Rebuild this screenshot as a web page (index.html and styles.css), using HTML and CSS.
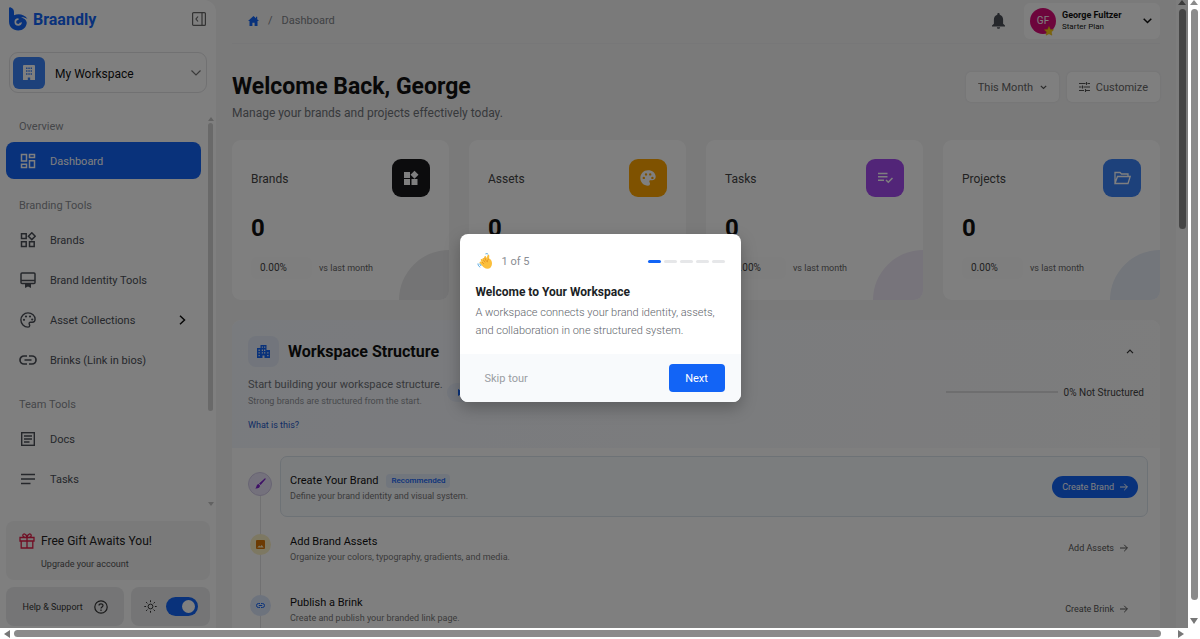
FILE: index.html
```html
<!DOCTYPE html>
<html lang="en">
<head>
    <meta charset="UTF-8">
    <meta name="viewport" content="width=device-width, initial-scale=1.0">
    <title>Braandly - Dashboard</title>
    <link rel="stylesheet" href="styles.css">
</head>
<body>
    <div class="frame">
        <div class="app">
            <aside class="sidebar">
                <div class="sidebar-top">
                    <a href="#" class="logo">
                        <svg width="19" height="24" viewBox="0 0 19 24"><path fill="#1264f6" fill-rule="evenodd" d="M0 1.500C0 .4 1 0 1.800.4 4 1.400 5 2.800 5 5v3.300C9 6.300 15.500 7 18.500 12c-2-1.300-4.300-1.900-6.500-1.700 3.300 1 5.300 2.700 5.800 5.500C17.500 20.300 14 23.500 9.200 23.500 4 23.500 0 19.800 0 14.500zM9.200 11.300a3.700 3.700 0 1 0 3.700 3.700c-.6.6-1.300.8-2 .6a1.900 1.900 0 1 1-1.700-2.500c.7-.6.700-1.200 0-1.800z"/></svg>
                        <span>Braandly</span>
                    </a>
                    <button class="icon-btn" aria-label="Collapse sidebar">
                        <svg width="14" height="14" viewBox="0 0 14 14" fill="none" stroke="#666" stroke-width="1.200"><rect x=".6" y=".6" width="12.800" height="12.800" rx="1"/><path d="M10 .6v12.800M6 4.500 4 7l2 2.500"/></svg>
                    </button>
                </div>

                <label class="workspace">
                    <span class="workspace-icon">
                        <svg width="12" height="15" viewBox="0 0 12 15"><path fill="#fff" fill-rule="evenodd" d="M1 0h10a1 1 0 0 1 1 1v14H7.200v-2.500H4.800V15H0V1a1 1 0 0 1 1-1zM3 2.500V4h1.500V2.500zm2.300 0V4h1.500V2.500zm2.300 0V4H9V2.500zM3 5.300v1.500h1.500V5.300zm2.300 0v1.500h1.500V5.300zm2.300 0v1.500H9V5.300zM3 8.200v1.500h1.500V8.200zm2.300 0v1.500h1.500V8.200zm2.300 0v1.500H9V8.200z"/></svg>
                    </span>
                    <select aria-label="Workspace">
                        <option>My Workspace</option>
                    </select>
                    <svg width="10" height="6" viewBox="0 0 10 6" fill="none" stroke="#777" stroke-width="1.200"><path d="m.5.5 4.500 4.500L9.500.5"/></svg>
                </label>

                <div class="nav-wrap">
                    <nav class="nav">
                        <h2>Overview</h2>
                        <ul>
                            <li><a href="#" class="active">
                                <svg width="16" height="16" viewBox="0 0 16 16" fill="none" stroke="currentColor" stroke-width="1.500"><path d="M1.500 1.500h5v6.500h-5zM9.500 1.500h5v3h-5zM9.500 7.800h5v6.700h-5zM1.500 11.200h5v3.300h-5z"/></svg>
                                Dashboard</a></li>
                        </ul>
                        <h2>Branding Tools</h2>
                        <ul>
                            <li><a href="#">
                                <svg width="16" height="16" viewBox="0 0 16 16" fill="none" stroke="currentColor" stroke-width="1.500"><path d="M1.500 1.800h4.700v4.700H1.500zM1.500 9.800h4.700v4.700H1.500zM9.500 9.800h4.700v4.700H9.500zM11.800.8l3.400 3.400-3.400 3.400-3.400-3.400z"/></svg>
                                Brands</a></li>
                            <li><a href="#">
                                <svg width="16" height="16" viewBox="0 0 16 16"><g fill="none" stroke="currentColor" stroke-width="1.500"><rect x="1" y="1" width="14" height="10.500" rx="1"/><path d="M1 8.500h14"/></g><path fill="currentColor" d="M5 11.500h6V16l-3-1.600L5 16z"/></svg>
                                Brand Identity Tools</a></li>
                            <li><a href="#">
                                <svg width="16" height="16" viewBox="0 0 16 16"><path fill="none" stroke="currentColor" stroke-width="1.400" d="M8 .9C4 .9.9 4 .9 8S4 15.100 8 15.100c1 0 1.700-.7 1.700-1.600 0-1-.6-1.200-.6-2 0-.7.600-1.300 1.300-1.300h1.800c1.800 0 2.900-1.200 2.900-3C15.100 3.600 12 .9 8 .9z"/><g fill="currentColor"><circle cx="4" cy="7.800" r="1.100"/><circle cx="6" cy="4.500" r="1.100"/><circle cx="10" cy="4.500" r="1.100"/><circle cx="12.200" cy="7.500" r="1.100"/></g></svg>
                                Asset Collections
                                <svg class="nav-arrow" width="7" height="10" viewBox="0 0 7 10" fill="none" stroke="#111" stroke-width="1.500"><path d="m1 .8 4.500 4.200L1 9.200"/></svg></a></li>
                            <li><a href="#">
                                <svg width="18" height="10" viewBox="0 0 18 10" fill="none" stroke="currentColor" stroke-width="1.700"><path d="M8 1H5a4 4 0 0 0 0 8h3M10 1h3a4 4 0 0 1 0 8h-3M5.500 5h7"/></svg>
                                Brinks (Link in bios)</a></li>
                        </ul>
                        <h2>Team Tools</h2>
                        <ul>
                            <li><a href="#">
                                <svg width="16" height="16" viewBox="0 0 16 16" fill="none" stroke="currentColor" stroke-width="1.400"><rect x="1.700" y="1.700" width="12.600" height="12.600"/><path d="M4 5h8M4 8h8M4 11h5.500"/></svg>
                                Docs</a></li>
                            <li><a href="#">
                                <svg width="16" height="12" viewBox="0 0 16 12" fill="none" stroke="currentColor" stroke-width="1.600"><path d="M1 1.500h14M1 6h14M1 10.500h9.500"/></svg>
                                Tasks</a></li>
                        </ul>
                    </nav>
                    <div class="nav-scroll">
                        <svg width="6" height="4" viewBox="0 0 6 4"><path fill="#c4c4c4" d="m3 0 3 4H0z"/></svg>
                        <span class="nav-thumb"></span>
                        <svg width="6" height="4" viewBox="0 0 6 4"><path fill="#c4c4c4" d="m3 4 3-4H0z"/></svg>
                    </div>
                </div>

                <div class="sidebar-bottom">
                    <a href="#" class="gift">
                        <svg width="16" height="16" viewBox="0 0 16 16" fill="none" stroke="#e11d48" stroke-width="1.300"><path d="M1 4.500h14V8H1zM2.200 8v7h11.600V8M8 4.500V15M8 4.500C6.500 4.500 3.800 4 3.800 2.400 3.800.2 7.500.3 8 4.500zM8 4.500c1.500 0 4.200-.5 4.200-2.100C12.200.2 8.500.3 8 4.500z"/></svg>
                        <span>
                            <strong>Free Gift Awaits You!</strong>
                            <small>Upgrade your account</small>
                        </span>
                    </a>
                    <div class="sidebar-actions">
                        <button class="help">Help &amp; Support
                            <svg width="14" height="14" viewBox="0 0 14 14" fill="none" stroke="#333" stroke-width="1.200"><circle cx="7" cy="7" r="6.200"/><path d="M5 5.600C5 3.200 9 3.200 9 5.500 9 7 7 6.900 7 8.600M7 9.500V11"/></svg>
                        </button>
                        <label class="theme">
                            <svg width="13" height="13" viewBox="0 0 13 13" fill="none" stroke="#333"><circle cx="6.500" cy="6.500" r="2.400"/><path d="M6.500.3v1.800M6.500 10.900v1.800M.3 6.500h1.800M10.900 6.500h1.800M2.100 2.100l1.300 1.300M9.600 9.600l1.300 1.300M10.900 2.100 9.600 3.400M3.400 9.600l-1.300 1.300"/></svg>
                            <input type="checkbox" class="switch" aria-label="Theme" checked>
                        </label>
                    </div>
                </div>
            </aside>

            <main class="main">
                <header class="topbar">
                    <nav class="breadcrumb">
                        <a href="#" aria-label="Home"><svg width="11" height="10" viewBox="0 0 11 10"><path fill="#1264f6" d="M5.500 0 8 2.200V.8h1.200v2.500L11 5H9.500v5H6.600V6.800H4.400V10H1.500V5H0z"/></svg></a>
                        <span>/</span>
                        <span>Dashboard</span>
                    </nav>
                    <button class="icon-btn bell" aria-label="Notifications">
                        <svg width="13" height="16" viewBox="0 0 13 16"><path fill="#4b4f57" d="M6.500 0c.7 0 1.200.5 1.200 1.200v.5c2.200.5 3.400 2.500 3.400 4.800v4.200l1.900 1.900v.8H0v-.8l1.900-1.900V6.500c0-2.300 1.200-4.300 3.400-4.800v-.5C5.300.5 5.800 0 6.500 0zM4.900 14.200h3.200c0 .900-.700 1.600-1.600 1.600s-1.600-.7-1.600-1.600z"/></svg>
                    </button>
                    <button class="user">
                        <span class="avatar">GF
                            <svg class="star" width="10" height="10" viewBox="0 0 10 10"><path fill="#facc15" stroke="#eab308" stroke-width=".5" d="m5 .5 1.400 2.900 3.200.4-2.300 2.200.600 3.200L5 7.700 2.100 9.200l.600-3.200L.4 3.800l3.200-.4z"/></svg>
                        </span>
                        <span class="user-text">
                            <strong>George Fultzer</strong>
                            <small>Starter Plan</small>
                        </span>
                        <svg width="9" height="6" viewBox="0 0 9 6" fill="none" stroke="#111" stroke-width="1.500"><path d="m.7.7 3.800 3.800L8.300.7"/></svg>
                    </button>
                </header>

                <div class="welcome">
                    <div>
                        <h1>Welcome Back, George</h1>
                        <p>Manage your brands and projects effectively today.</p>
                    </div>
                    <div class="welcome-actions">
                        <label class="control">
                            <select aria-label="Period">
                                <option>This Month</option>
                            </select>
                            <svg width="7" height="5" viewBox="0 0 7 5" fill="none" stroke="#555" stroke-width="1.200"><path d="m.8.8 2.700 2.700L6.200.8"/></svg>
                        </label>
                        <button class="control">
                            <svg width="11" height="10" viewBox="0 0 11 10" fill="none" stroke="#555" stroke-width="1.100"><path d="M0 1.500h6.500M8.500 1.500H11M7.500 0v3M0 5h2.500M4.500 5H11M3.500 3.500v3M0 8.500h5M7 8.500h4M6.500 7v3"/></svg>
                            Customize
                        </button>
                    </div>
                </div>

                <section class="stats">
                    <article class="card card-brands">
                        <div class="card-top">
                            <h3>Brands</h3>
                            <span class="card-icon"><svg width="16" height="16" viewBox="0 0 16 16"><path fill="#fff" d="M1 2h6v6H1zM1 9h6v6H1zM8.500 9h6v6h-6zM11.500.8l4 4-4 4-4-4z"/></svg></span>
                        </div>
                        <p class="value">0</p>
                        <p class="trend"><span>0.00%</span> vs last month</p>
                    </article>
                    <article class="card card-assets">
                        <div class="card-top">
                            <h3>Assets</h3>
                            <span class="card-icon"><svg width="16" height="16" viewBox="0 0 16 16"><path fill="#fff" fill-rule="evenodd" d="M8 .3C3.700.3.3 3.700.3 8s3.400 7.700 7.700 7.700c1.200 0 2-.9 2-2 0-1.100-.7-1.400-.7-2.200 0-.7.500-1.200 1.200-1.200H12c2.200 0 3.700-1.400 3.700-3.500C15.700 3 12.300.3 8 .3zM3.800 6.700a1.200 1.200 0 1 0 .01 2.400 1.200 1.200 0 0 0 0-2.400zM6 3.200a1.200 1.200 0 1 0 .01 2.400A1.200 1.200 0 0 0 6 3.200zm4.200 0a1.200 1.200 0 1 0 .01 2.400 1.200 1.200 0 0 0 0-2.400zm2.200 3.500a1.200 1.200 0 1 0 .01 2.400 1.200 1.200 0 0 0 0-2.400z"/></svg></span>
                        </div>
                        <p class="value">0</p>
                        <p class="trend"><span>0.00%</span> vs last month</p>
                    </article>
                    <article class="card card-tasks">
                        <div class="card-top">
                            <h3>Tasks</h3>
                            <span class="card-icon"><svg width="16" height="14" viewBox="0 0 16 14" fill="none" stroke="#fff" stroke-width="1.500"><path d="M1 2.500h9.500M1 5.800h9.500M1 9.200h6M9 9l2.300 2.300L15.500 7"/></svg></span>
                        </div>
                        <p class="value">0</p>
                        <p class="trend"><span>0.00%</span> vs last month</p>
                    </article>
                    <article class="card card-projects">
                        <div class="card-top">
                            <h3>Projects</h3>
                            <span class="card-icon"><svg width="17" height="14" viewBox="0 0 17 14" fill="none" stroke="#fff" stroke-width="1.300"><path d="M1 12.500V1.500h5L7.500 3H14v2.500M1 12.500 3.500 5.500h12.700L14 12.500z"/></svg></span>
                        </div>
                        <p class="value">0</p>
                        <p class="trend"><span>0.00%</span> vs last month</p>
                    </article>
                </section>

                <section class="structure">
                    <div class="structure-head">
                        <div class="structure-title">
                            <span class="structure-icon"><svg width="13" height="13" viewBox="0 0 13 13"><path fill="#1264f6" fill-rule="evenodd" d="M3.500 0h6v5H13v8H7.500v-2.500h-2V13H0V3h3.500zM4.800 1.500v1.300H6V1.500zm2.200 0v1.300h1.300V1.500zM1.500 4.600v1.300h1.300V4.600zm3.300 0v1.300H6V4.600zm2.200 0v1.300h1.300V4.600zM1.500 7.300v1.300h1.300V7.300zm3.300 0v1.300H6V7.300zm2.200 0v1.300h1.300V7.300zm3.200 0v1.300h1.300V7.300zM1.500 10v1.300h1.300V10zm8.700 0v1.300h1.300V10z"/></svg></span>
                            <h2>Workspace Structure</h2>
                            <button class="icon-btn" aria-label="Collapse section">
                                <svg width="8" height="5" viewBox="0 0 8 5" fill="none" stroke="#333" stroke-width="1.200"><path d="m1 4.200 3-3 3 3"/></svg>
                            </button>
                        </div>
                        <div class="structure-body">
                            <div>
                                <p class="lead">Start building your workspace structure.</p>
                                <p class="note">Strong brands are structured from the start.</p>
                            </div>
                            <span class="play"><svg width="6" height="7" viewBox="0 0 6 7"><path fill="#1264f6" d="M0 0l6 3.500L0 7z"/></svg></span>
                            <label class="progress"><progress value="0" max="100"></progress>0% Not Structured</label>
                        </div>
                        <a href="#" class="what">What is this?</a>
                    </div>

                    <ol class="steps">
                        <li class="step current">
                            <span class="step-icon purple"><svg width="11" height="11" viewBox="0 0 11 11"><path fill="#7e22ce" d="M9.700.4c.5-.3 1.200.4.9.9L5.600 6.900 4.100 5.400zM3.500 6l1.500 1.500C5 9.500 3.500 10.600.3 10.400 1.700 9.700 1.300 6.200 3.500 6z"/></svg></span>
                            <div class="step-box">
                                <div class="step-text">
                                    <h3>Create Your Brand <span class="badge">Recommended</span></h3>
                                    <p>Define your brand identity and visual system.</p>
                                </div>
                                <button class="step-btn">Create Brand <svg width="8" height="8" viewBox="0 0 8 8" fill="none" stroke="currentColor"><path d="M0 4h7.300M4.200.8 7.400 4 4.200 7.200"/></svg></button>
                            </div>
                        </li>
                        <li class="step">
                            <span class="step-icon yellow"><svg width="9" height="9" viewBox="0 0 9 9"><path fill="#d97706" fill-rule="evenodd" d="M1 0h7a1 1 0 0 1 1 1v7a1 1 0 0 1-1 1H1a1 1 0 0 1-1-1V1a1 1 0 0 1 1-1zM1.300 7.500h6.400L5.700 5 4.300 6.600 3.200 5.500z"/></svg></span>
                            <div class="step-box">
                                <div class="step-text">
                                    <h3>Add Brand Assets</h3>
                                    <p>Organize your colors, typography, gradients, and media.</p>
                                </div>
                                <button class="step-btn">Add Assets <svg width="8" height="8" viewBox="0 0 8 8" fill="none" stroke="currentColor"><path d="M0 4h7.300M4.200.8 7.400 4 4.200 7.200"/></svg></button>
                            </div>
                        </li>
                        <li class="step">
                            <span class="step-icon blue"><svg width="9" height="5" viewBox="0 0 9 5" fill="none" stroke="#1264f6"><path d="M4 .5H2.500a2 2 0 0 0 0 4H4M5 .5h1.500a2 2 0 0 1 0 4H5M2.800 2.500h3.400"/></svg></span>
                            <div class="step-box">
                                <div class="step-text">
                                    <h3>Publish a Brink</h3>
                                    <p>Create and publish your branded link page.</p>
                                </div>
                                <button class="step-btn">Create Brink <svg width="8" height="8" viewBox="0 0 8 8" fill="none" stroke="currentColor"><path d="M0 4h7.300M4.200.8 7.400 4 4.200 7.200"/></svg></button>
                            </div>
                        </li>
                    </ol>
                </section>
            </main>

            <div class="scroll inner">
                <svg width="8" height="5" viewBox="0 0 8 5"><path fill="#777" d="m4 0 4 5H0z"/></svg>
                <span class="thumb"></span>
            </div>
            <div class="overlay"></div>
        </div>

        <div class="scroll outer">
            <svg width="8" height="5" viewBox="0 0 8 5"><path fill="#8b8b8b" d="m4 0 4 5H0z"/></svg>
            <span class="thumb"></span>
            <svg width="8" height="6" viewBox="0 0 8 6"><path fill="#777" d="M4 6 0 0h8z"/></svg>
        </div>
        <div class="scroll bottom">
            <svg width="6" height="8" viewBox="0 0 6 8"><path fill="#777" d="M0 4 6 0v8z"/></svg>
            <span class="thumb"></span>
            <svg width="6" height="8" viewBox="0 0 6 8"><path fill="#777" d="M6 4 0 0v8z"/></svg>
        </div>

        <div class="modal-wrap">
            <div class="modal" role="dialog" aria-labelledby="tour-title">
                <div class="modal-body">
                    <div class="modal-top">
                        <svg width="17" height="17" viewBox="0 0 17 17"><path fill="#fbbf3c" d="M7.500 3.500c.6-.8 1.600-.3 1.700.4l.3 1.300 1-2.800c.4-1 1.900-.7 1.800.5l-.2 2.700c2 .9 3 2.800 2.900 5.200-.1 3-2 5-4.600 5-2.400 0-3.900-1.300-5-2.700L2.700 9.900c-.6-.9.5-1.900 1.400-1.300l.6.4-.9-1.600c-.5-1 .8-1.700 1.400-1l.5.600-.2-1c-.2-1.100 1.200-1.500 1.700-.7z"/><path fill="none" stroke="#e08a1e" stroke-width=".7" d="m6 6.500 2.200 2.800M7.600 4.500l1.900 4M5 9l2 2M12.100 5.600c-1.300.7-1.900 2-1.600 3.600"/><path fill="none" stroke="#4aa3df" d="M8.500.9c1-.5 2-.3 2.700.5M1 10.500c0 1.700.8 2.900 2.200 3.700M2.800 10.600c.2 1 .7 1.800 1.500 2.400"/></svg>
                        <span class="count">1 of 5</span>
                        <span class="dots"><i class="on"></i><i></i><i></i><i></i><i></i></span>
                    </div>
                    <h2 id="tour-title">Welcome to Your Workspace</h2>
                    <p>A workspace connects your brand identity, assets, and collaboration in one structured system.</p>
                </div>
                <div class="modal-foot">
                    <button class="skip">Skip tour</button>
                    <button class="next">Next</button>
                </div>
            </div>
        </div>
    </div>
</body>
</html>
```
FILE: styles.css
```css
* {
    margin: 0;
    padding: 0;
    box-sizing: border-box;
}

body {
    font-family: Roboto, "Noto Sans", sans-serif;
    font-size: 11px;
    color: #333;
    background: #fff;
}

button, select {
    font: inherit;
    color: inherit;
    border: none;
    background: none;
    cursor: pointer;
}

select {
    appearance: none;
}

a {
    color: inherit;
    text-decoration: none;
}

ul, ol {
    list-style: none;
}

svg {
    display: block;
    flex-shrink: 0;
}

.frame {
    position: relative;
    display: grid;
    grid-template-columns: 1fr 12px;
    grid-template-rows: 1fr 11px;
    height: 100vh;
    overflow: hidden;
}

.app {
    position: relative;
    display: flex;
    min-height: 0;
    overflow: hidden;
    background: #f4f4f5;
}

.overlay {
    position: absolute;
    inset: 0;
    background: rgba(0, 0, 0, 0.5);
}

.icon-btn {
    display: flex;
    align-items: center;
    justify-content: center;
}

/* Sidebar */
.sidebar {
    width: 216px;
    flex-shrink: 0;
    display: flex;
    flex-direction: column;
    background: #fff;
    border-radius: 0 12px 0 0;
}

.sidebar-top {
    display: flex;
    justify-content: space-between;
    align-items: center;
    padding: 7px 10px 0 9px;
}

.logo {
    display: flex;
    align-items: center;
    gap: 5px;
    font-size: 16px;
    font-weight: 700;
    color: #1264f6;
}

.workspace {
    display: flex;
    align-items: center;
    gap: 10px;
    height: 41px;
    margin: 21px 9px 0;
    padding: 0 5px 0 3px;
    border: 1px solid #e2e2e4;
    border-radius: 9px;
}

.workspace-icon {
    display: grid;
    place-items: center;
    width: 32px;
    height: 32px;
    border-radius: 6px;
    background: #3b82f6;
}

.workspace select {
    flex: 1;
    padding-top: 2px;
    font-size: 12px;
    color: #111;
}

.nav-wrap {
    flex: 1;
    display: flex;
    min-height: 0;
    margin-top: 24px;
}

.nav {
    flex: 1;
    padding-left: 6px;
}

.nav h2 {
    padding-left: 13px;
    margin: 20px 0 8px;
    font-size: 11px;
    line-height: 14px;
    font-weight: 400;
    color: #8a8d93;
}

.nav h2:first-child {
    margin-top: 3px;
}

.nav ul {
    display: flex;
    flex-direction: column;
    gap: 3px;
}

.nav a {
    display: grid;
    grid-template-columns: 16px 1fr auto;
    align-items: center;
    justify-items: start;
    gap: 14px;
    height: 37px;
    padding: 1px 15px 0 14px;
    border-radius: 8px;
    color: #4b4f57;
}

.nav a > svg:first-child {
    justify-self: center;
}

.nav a.active {
    background: #1264f6;
    color: #fff;
}

.nav-scroll {
    width: 15px;
    display: flex;
    flex-direction: column;
    align-items: center;
    padding: 0 0 3px 4px;
}

.nav-thumb {
    flex: 0 1 74%;
    width: 5px;
    margin: 2px 0 auto;
    border-radius: 3px;
    background: #d2d2d2;
}

.sidebar-bottom {
    padding: 12px 6px 2px;
}

.gift {
    display: flex;
    gap: 6px;
    height: 59px;
    padding: 12px 13px;
    border-radius: 8px;
    background: #f4f4f5;
}

.gift strong {
    display: block;
    font-size: 12px;
    line-height: 16px;
    font-weight: 400;
    color: #222;
}

.gift small {
    display: block;
    margin-top: 8px;
    font-size: 9px;
    line-height: 14px;
    color: #555;
}

.sidebar-actions {
    display: flex;
    gap: 7px;
    margin-top: 7px;
}

.help, .theme {
    display: flex;
    align-items: center;
    justify-content: center;
    gap: 11px;
    height: 39px;
    border-radius: 8px;
    background: #eaebed;
}

.help {
    flex: 3;
    font-size: 9px;
    white-space: nowrap;
}

.theme {
    flex: 2;
    gap: 9px;
}

.switch {
    appearance: none;
    display: flex;
    justify-content: flex-end;
    align-items: center;
    width: 32px;
    height: 19px;
    padding: 3px;
    border-radius: 10px;
    background: #1264f6;
}

.switch::before {
    content: "";
    width: 13px;
    height: 13px;
    border-radius: 50%;
    background: #fff;
}

/* Main area */
.main {
    flex: 1;
    min-width: 0;
    overflow: hidden;
    padding: 0 16px;
}

.topbar {
    display: flex;
    align-items: center;
    height: 44px;
    padding: 0 0 2px 16px;
    border-bottom: 1px solid #efeff0;
}

.breadcrumb {
    display: flex;
    align-items: center;
    gap: 9px;
    margin-right: auto;
    color: #808388;
}

.user {
    display: flex;
    align-items: center;
    gap: 6px;
    width: 136px;
    height: 36px;
    margin-left: 19px;
    padding: 0 8px 0 6px;
    border-radius: 6px;
    background: #fff;
    text-align: left;
}

.avatar {
    position: relative;
    display: grid;
    place-items: center;
    width: 26px;
    height: 26px;
    border-radius: 50%;
    background: #db0a78;
    color: #fff;
    font-size: 10px;
}

.star {
    position: absolute;
    right: 2px;
    bottom: -2px;
}

.user-text {
    flex: 1;
    color: #111;
    line-height: 11px;
}

.user-text strong, .user-text small {
    display: block;
    white-space: nowrap;
}

.user-text strong {
    font-size: 9px;
}

.user-text small {
    font-size: 8px;
}

.welcome {
    display: flex;
    justify-content: space-between;
    align-items: flex-start;
    margin-top: 28px;
}

h1 {
    font-size: 23px;
    line-height: 30px;
    font-weight: 700;
    color: #111;
}

.welcome p {
    margin-top: 2px;
    font-size: 12px;
    line-height: 18px;
    color: #6f7278;
}

.welcome-actions {
    display: flex;
    gap: 8px;
}

.control {
    display: flex;
    align-items: center;
    gap: 6px;
    height: 30px;
    padding: 0 12px;
    border-radius: 5px;
    background: #fff;
    box-shadow: 0 0 2px rgba(0, 0, 0, 0.1);
    color: #666;
}

.stats {
    display: grid;
    grid-template-columns: repeat(4, 1fr);
    gap: 20px;
    margin-top: 18px;
}

.card {
    position: relative;
    height: 160px;
    padding: 19px;
    border-radius: 9px;
    background: #fff;
    overflow: hidden;
}

.card::after {
    content: "";
    position: absolute;
    right: -50px;
    bottom: -50px;
    width: 100px;
    height: 100px;
    border-radius: 50%;
}

.card-top {
    display: flex;
    justify-content: space-between;
    align-items: center;
}

.card h3 {
    padding-top: 2px;
    font-size: 12px;
    font-weight: 400;
    color: #444;
}

.card-icon {
    display: grid;
    place-items: center;
    width: 38px;
    height: 38px;
    border-radius: 9px;
}

.card-brands .card-icon { background: #18181b; }
.card-assets .card-icon { background: #ffa500; }
.card-tasks .card-icon { background: #a54bf0; }
.card-projects .card-icon { background: #3b82f6; }
.card-brands::after { background: #e9e9ea; }
.card-assets::after { background: #fdf3dc; }
.card-tasks::after { background: #efe9f6; }
.card-projects::after { background: #e6ecf6; }

.value {
    margin-top: 17px;
    font-size: 24px;
    line-height: 28px;
    font-weight: 700;
    color: #111;
}

.trend {
    display: flex;
    align-items: center;
    gap: 7px;
    margin-top: 15px;
    font-size: 9px;
    color: #666;
}

.trend span {
    width: 61px;
    padding: 0 9px;
    line-height: 22px;
    border-radius: 6px;
    background: #fcfcfd;
    font-size: 10px;
    color: #444;
}

/* Workspace structure */
.structure {
    margin-top: 20px;
    border-radius: 9px;
    background: #fff;
    overflow: hidden;
}

.structure-head {
    height: 128px;
    padding: 16px 16px 0;
    background: linear-gradient(100deg, #f3f6fc, #fafafb);
}

.structure-title {
    display: flex;
    align-items: center;
    gap: 9px;
}

.structure-title .icon-btn {
    margin: 0 10px 0 auto;
}

.structure-icon {
    display: grid;
    place-items: center;
    width: 31px;
    height: 31px;
    border-radius: 8px;
    background: #e4ebf8;
}

.structure-title h2 {
    font-size: 16px;
    font-weight: 700;
    color: #111;
}

.structure-body {
    display: flex;
    align-items: center;
    gap: 4px;
    margin-top: 9px;
}

.lead {
    font-size: 11px;
    line-height: 18px;
    color: #6f7278;
}

.note {
    font-size: 9px;
    line-height: 14px;
    color: #909399;
}

.play {
    padding: 6px 11px;
    border-radius: 10px;
    background: #e8eefa;
}

.progress {
    display: flex;
    align-items: center;
    gap: 6px;
    margin-left: auto;
    font-size: 10px;
    color: #444;
}

progress {
    appearance: none;
    width: 112px;
    height: 2px;
    border: none;
    background: #dcdcde;
}

progress::-webkit-progress-bar {
    background: #dcdcde;
}

.what {
    display: inline-block;
    margin-top: 10px;
    font-size: 9px;
    line-height: 14px;
    color: #2458c8;
}

.steps {
    padding: 8px 12px 0 16px;
}

.step {
    position: relative;
    display: grid;
    grid-template-columns: 24px 1fr;
    align-items: center;
    gap: 8px;
}

/* line joining the step icons */
.step::before {
    content: "";
    position: absolute;
    left: 12px;
    top: 50%;
    width: 1px;
    height: 100%;
    background: #e2e2e4;
}

.step-icon {
    position: relative;
    display: grid;
    place-items: center;
    justify-self: center;
    width: 21px;
    height: 21px;
    margin-bottom: 6px;
    border-radius: 50%;
}

.step-icon.purple {
    width: 24px;
    height: 24px;
    border: 1px solid #d0c8e6;
    background: #e9e3f8;
}

.step-icon.yellow { background: #fbf0c4; }
.step-icon.blue { background: #dbe6fb; }

.step-box {
    display: flex;
    justify-content: space-between;
    align-items: center;
    height: 61px;
    padding: 0 9px;
    border: 1px solid transparent;
    border-radius: 7px;
}

.current .step-box {
    border-color: #dbe4ec;
    background: #f7fafd;
}

.step-text {
    padding-top: 3px;
}

.step h3 {
    display: flex;
    align-items: center;
    gap: 8px;
    font-size: 11px;
    line-height: 16px;
    font-weight: 400;
    color: #111;
}

.step p {
    font-size: 9px;
    line-height: 15px;
    color: #777;
}

.badge {
    padding: 0 5px;
    line-height: 14px;
    border-radius: 4px;
    background: #e3ecfb;
    font-size: 8px;
    font-weight: 500;
    color: #1264f6;
}

.step-btn {
    display: flex;
    align-items: center;
    gap: 6px;
    height: 22px;
    padding: 0 10px;
    border-radius: 11px;
    font-size: 9px;
    color: #555;
}

.current .step-btn {
    background: #1264f6;
    color: #fff;
}

/* Scrollbars */
.scroll {
    display: flex;
    flex-direction: column;
    align-items: center;
    background: #fff;
}

.thumb {
    width: 7px;
    border-radius: 4px;
    background: #8b8b8b;
}

.inner {
    width: 12px;
    background: #fbfbfb;
}

.inner .thumb {
    flex: 0 0 35%;
    margin-top: 4px;
}

.outer .thumb {
    flex: 1;
    margin: 4px 0 18px;
}

.outer {
    padding-bottom: 4px;
}

.bottom {
    flex-direction: row;
    padding: 0 4px;
}

.bottom .thumb {
    flex: 1;
    height: 7px;
    margin: 0 17px 0 4px;
}

/* Tour modal */
.modal-wrap {
    position: absolute;
    inset: 0;
    display: grid;
    place-items: center;
    padding-bottom: 3px;
}

.modal {
    width: 281px;
    border-radius: 8px;
    background: #fff;
    box-shadow: 0 6px 16px rgba(0, 0, 0, 0.25);
    overflow: hidden;
}

.modal-body {
    padding: 18px 16px 14px;
}

.modal-top {
    display: flex;
    align-items: center;
    height: 18px;
    gap: 8px;
    padding-left: 1px;
}

.count {
    color: #8a8d93;
}

.dots {
    display: flex;
    gap: 3px;
    margin-left: auto;
}

.dots i {
    width: 13px;
    height: 3px;
    border-radius: 2px;
    background: #e6e7e9;
}

.dots .on {
    background: #1264f6;
}

.modal h2 {
    margin-top: 13px;
    font-size: 12px;
    line-height: 18px;
    font-weight: 700;
    color: #1c1f26;
}

.modal p {
    margin-top: 3px;
    font-size: 11px;
    line-height: 18px;
    font-weight: 300;
    color: #60646b;
}

.modal-foot {
    display: flex;
    justify-content: space-between;
    align-items: center;
    padding: 10px 16px;
    background: #f8fafc;
}

.skip {
    padding: 0 9px;
    color: #9a9da3;
}

.next {
    width: 56px;
    height: 28px;
    border-radius: 4px;
    background: #1264f6;
    color: #fff;
}
```
